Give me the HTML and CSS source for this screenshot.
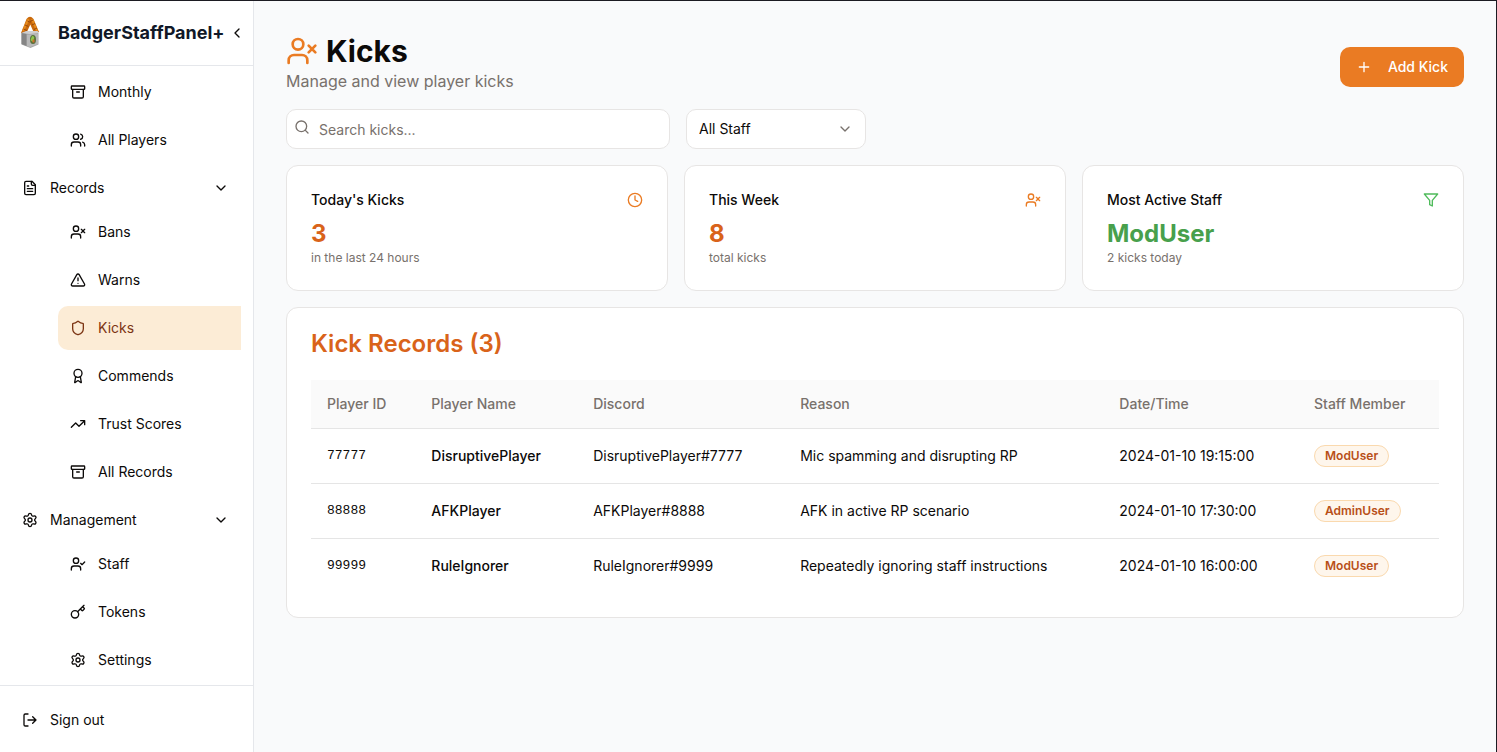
FILE: index.html
```html
<!DOCTYPE html>
<html lang="en">
<head>
<meta charset="utf-8">
<meta name="viewport" content="width=device-width, initial-scale=1">
<title>Kicks - BadgerStaffPanel+</title>
<link rel="stylesheet" href="styles.css">
</head>
<body>
<svg class="sprite" aria-hidden="true">
  <symbol id="archive" viewBox="0 0 24 24"><rect x="2" y="3" width="20" height="5" rx="1"/><path d="M4 8v11a2 2 0 0 0 2 2h12a2 2 0 0 0 2-2V8M10 12h4"/></symbol>
  <symbol id="users" viewBox="0 0 24 24"><path d="M16 21v-2a4 4 0 0 0-4-4H6a4 4 0 0 0-4 4v2"/><circle cx="9" cy="7" r="4"/><path d="M22 21v-2a4 4 0 0 0-3-3.87M16 3.13a4 4 0 0 1 0 7.75"/></symbol>
  <symbol id="file-text" viewBox="0 0 24 24"><path d="M15 2H6a2 2 0 0 0-2 2v16a2 2 0 0 0 2 2h12a2 2 0 0 0 2-2V7Z"/><path d="M14 2v4a2 2 0 0 0 2 2h4M10 9H8M16 13H8M16 17H8"/></symbol>
  <symbol id="user-x" viewBox="0 0 24 24"><path d="M16 21v-2a4 4 0 0 0-4-4H6a4 4 0 0 0-4 4v2"/><circle cx="9" cy="7" r="4"/><path d="m17 8 5 5M22 8l-5 5"/></symbol>
  <symbol id="user-check" viewBox="0 0 24 24"><path d="M16 21v-2a4 4 0 0 0-4-4H6a4 4 0 0 0-4 4v2"/><circle cx="9" cy="7" r="4"/><path d="m16 11 2 2 4-4"/></symbol>
  <symbol id="alert" viewBox="0 0 24 24"><path d="m21.73 18-8-14a2 2 0 0 0-3.48 0l-8 14A2 2 0 0 0 4 21h16a2 2 0 0 0 1.73-3M12 9v4M12 17h.01"/></symbol>
  <symbol id="shield" viewBox="0 0 24 24"><path d="M20 13c0 5-3.500 7.500-7.660 8.950a1 1 0 0 1-.670-.010C7.500 20.500 4 18 4 13V6a1 1 0 0 1 1-1c2 0 4.500-1.200 6.240-2.720a1.170 1.170 0 0 1 1.520 0C14.510 3.810 17 5 19 5a1 1 0 0 1 1 1z"/></symbol>
  <symbol id="award" viewBox="0 0 24 24"><path d="m15.477 12.890 1.515 8.526a.5.5 0 0 1-.810.470l-3.580-2.687a1 1 0 0 0-1.197 0l-3.586 2.686a.5.5 0 0 1-.810-.469l1.514-8.526"/><circle cx="12" cy="8" r="6"/></symbol>
  <symbol id="trending" viewBox="0 0 24 24"><path d="m22 7-8.500 8.500-5-5L2 17M16 7h6v6"/></symbol>
  <symbol id="settings" viewBox="0 0 24 24"><path d="M9.671 4.136a2.340 2.340 0 0 1 4.659 0 2.340 2.340 0 0 0 3.319 1.915 2.340 2.340 0 0 1 2.330 4.033 2.340 2.340 0 0 0 0 3.831 2.340 2.340 0 0 1-2.330 4.033 2.340 2.340 0 0 0-3.319 1.915 2.340 2.340 0 0 1-4.659 0 2.340 2.340 0 0 0-3.320-1.915 2.340 2.340 0 0 1-2.330-4.033 2.340 2.340 0 0 0 0-3.831A2.340 2.340 0 0 1 6.350 6.051a2.340 2.340 0 0 0 3.319-1.915"/><circle cx="12" cy="12" r="3"/></symbol>
  <symbol id="key" viewBox="0 0 24 24"><path d="m15.500 7.500 2.300 2.300a1 1 0 0 0 1.400 0l2.100-2.100a1 1 0 0 0 0-1.400L19 4M21 2l-9.600 9.600"/><circle cx="7.500" cy="15.500" r="5.500"/></symbol>
  <symbol id="logout" viewBox="0 0 24 24"><path d="m16 17 5-5-5-5M21 12H9M9 21H5a2 2 0 0 1-2-2V5a2 2 0 0 1 2-2h4"/></symbol>
  <symbol id="chevron-down" viewBox="0 0 24 24"><path d="m6 9 6 6 6-6"/></symbol>
  <symbol id="chevron-left" viewBox="0 0 24 24"><path d="m15 18-6-6 6-6"/></symbol>
  <symbol id="plus" viewBox="0 0 24 24"><path d="M5 12h14M12 5v14"/></symbol>
  <symbol id="search" viewBox="0 0 24 24"><circle cx="11" cy="11" r="8"/><path d="m21 21-4.300-4.300"/></symbol>
  <symbol id="clock" viewBox="0 0 24 24"><circle cx="12" cy="12" r="10"/><path d="M12 6v6l4 2"/></symbol>
  <symbol id="filter" viewBox="0 0 24 24"><path d="M22 3H2l8 9.460V19l4 2v-8.540L22 3z"/></symbol>
</svg>

<div class="app">
  <aside class="sidebar">
    <header class="brand">
      <svg class="logo" viewBox="0 0 36 36" aria-hidden="true">
        <path d="M9 18 14.500 4Q18-.5 21.500 4L27 17l-5 1L18.300 9.500 14.500 18z" fill="#c9690c"/>
        <path d="M11 16 16.500 4M25 16 20 4" fill="none" stroke="#e58a1b" stroke-width="2"/>
        <path d="m11.500 14 3.500 1.500m-2-5.500 3.500 1.500m-1-5.500 3 1.500m3.500 7 3-1.500m-5-3 3-1.500m-5-2 3-1.500" stroke="#98490c" stroke-width="1"/>
        <path d="m9.500 18 5-2h11l1 2v11.500l-8 3.500-9-3.500z" fill="#a9a9a9"/>
        <path d="m9.500 18 5-2h11l1 2-9 1z" fill="#cfcfcf"/>
        <path d="m9.500 18 5 1V31l-5-2z" fill="#858585"/>
        <path d="m15 20 11-1v10l-8 3-3-1z" fill="#b9b9b9"/>
        <ellipse cx="21" cy="24.500" rx="3" ry="4.500" fill="#56703a"/>
        <path d="M20 21q3 0 2 3l-1.500 3-2-2z" fill="#8fc64a"/>
        <path d="M20.500 24.500h2v3h-2z" fill="#cf6b29"/>
      </svg>
      <span class="brand-name">BadgerStaffPanel+</span>
      <button class="collapse" type="button" aria-label="Collapse sidebar"><svg class="icon"><use href="#chevron-left"/></svg></button>
    </header>
    <nav class="nav" aria-label="Main">
      <div class="group">
        <div class="subnav">
          <a class="item" href="#"><svg class="icon"><use href="#archive"/></svg>Monthly</a>
          <a class="item" href="#"><svg class="icon"><use href="#users"/></svg>All Players</a>
        </div>
      </div>
      <div class="group">
        <button class="item" type="button" aria-expanded="true"><svg class="icon"><use href="#file-text"/></svg><span class="grow">Records</span><svg class="icon"><use href="#chevron-down"/></svg></button>
        <div class="subnav">
          <a class="item" href="#"><svg class="icon"><use href="#user-x"/></svg>Bans</a>
          <a class="item" href="#"><svg class="icon"><use href="#alert"/></svg>Warns</a>
          <a class="item active" href="#" aria-current="page"><svg class="icon"><use href="#shield"/></svg>Kicks</a>
          <a class="item" href="#"><svg class="icon"><use href="#award"/></svg>Commends</a>
          <a class="item" href="#"><svg class="icon"><use href="#trending"/></svg>Trust Scores</a>
          <a class="item" href="#"><svg class="icon"><use href="#archive"/></svg>All Records</a>
        </div>
      </div>
      <div class="group">
        <button class="item" type="button" aria-expanded="true"><svg class="icon"><use href="#settings"/></svg><span class="grow">Management</span><svg class="icon"><use href="#chevron-down"/></svg></button>
        <div class="subnav">
          <a class="item" href="#"><svg class="icon"><use href="#user-check"/></svg>Staff</a>
          <a class="item" href="#"><svg class="icon"><use href="#key"/></svg>Tokens</a>
          <a class="item" href="#"><svg class="icon"><use href="#settings"/></svg>Settings</a>
        </div>
      </div>
    </nav>
    <footer class="signout">
      <button class="item" type="button"><svg class="icon"><use href="#logout"/></svg>Sign out</button>
    </footer>
  </aside>

  <main class="main">
    <header class="page-head">
      <div>
        <h1><svg class="icon icon-lg"><use href="#user-x"/></svg>Kicks</h1>
        <p class="subtitle">Manage and view player kicks</p>
      </div>
      <button class="add" type="button"><svg class="icon"><use href="#plus"/></svg>Add Kick</button>
    </header>

    <div class="filters">
      <div class="search">
        <svg class="icon"><use href="#search"/></svg>
        <input type="search" aria-label="Search kicks" placeholder="Search kicks...">
      </div>
      <div class="select">
        <select aria-label="Staff"><option>All Staff</option><option>ModUser</option><option>AdminUser</option></select>
        <svg class="icon"><use href="#chevron-down"/></svg>
      </div>
    </div>

    <section class="stats">
      <article class="card">
        <div class="card-head"><h2>Today's Kicks</h2><svg class="icon orange"><use href="#clock"/></svg></div>
        <p class="value">3</p>
        <p class="note">in the last 24 hours</p>
      </article>
      <article class="card">
        <div class="card-head"><h2>This Week</h2><svg class="icon orange"><use href="#user-x"/></svg></div>
        <p class="value">8</p>
        <p class="note">total kicks</p>
      </article>
      <article class="card">
        <div class="card-head"><h2>Most Active Staff</h2><svg class="icon green"><use href="#filter"/></svg></div>
        <p class="value value-green">ModUser</p>
        <p class="note">2 kicks today</p>
      </article>
    </section>

    <section class="card">
      <h2 class="records-title">Kick Records (3)</h2>
      <table>
        <thead><tr><th>Player ID</th><th>Player Name</th><th>Discord</th><th>Reason</th><th>Date/Time</th><th>Staff Member</th></tr></thead>
        <tbody>
          <tr><td class="mono">77777</td><td class="name">DisruptivePlayer</td><td>DisruptivePlayer#7777</td><td>Mic spamming and disrupting RP</td><td>2024-01-10 19:15:00</td><td><span class="badge">ModUser</span></td></tr>
          <tr><td class="mono">88888</td><td class="name">AFKPlayer</td><td>AFKPlayer#8888</td><td>AFK in active RP scenario</td><td>2024-01-10 17:30:00</td><td><span class="badge">AdminUser</span></td></tr>
          <tr><td class="mono">99999</td><td class="name">RuleIgnorer</td><td>RuleIgnorer#9999</td><td>Repeatedly ignoring staff instructions</td><td>2024-01-10 16:00:00</td><td><span class="badge">ModUser</span></td></tr>
        </tbody>
      </table>
    </section>
  </main>
</div>
</body>
</html>
```
FILE: styles.css
```css
* { box-sizing: border-box; }

body {
  margin: 0;
  font: 14px/20px Inter, "Liberation Sans", sans-serif;
  color: #0c0a09;
  background: #f9fafb;
}

h1, h2, p { margin: 0; }
button, input, select { font: inherit; color: inherit; }
button { border: 0; background: none; cursor: pointer; }

.sprite { position: absolute; width: 0; height: 0; }

.icon {
  width: 16px;
  height: 16px;
  flex: none;
  fill: none;
  stroke: currentColor;
  stroke-width: 2;
  stroke-linecap: round;
  stroke-linejoin: round;
}
.icon-lg { width: 32px; height: 32px; color: #ea7b23; }
.orange { color: #ea7b23; }
.green { color: #4fbb5b; }

.app {
  display: flex;
  height: 100vh;
  border-top: 1px solid #1c1b22;
  border-right: 1px solid #1c1b22;
}

/* Sidebar */
.sidebar {
  display: flex;
  flex-direction: column;
  flex: none;
  width: 254px;
  background: #fff;
  border-right: 1px solid #e5e7eb;
}
.brand {
  display: flex;
  align-items: center;
  height: 65px;
  padding: 0 8px 0 12px;
  border-bottom: 1px solid #e5e7eb;
}
.logo { width: 36px; height: 36px; margin-right: 10px; }
.brand-name {
  flex: 1;
  font-size: 18px;
  line-height: 28px;
  font-weight: 700;
  color: #111827;
}
.collapse { display: flex; padding: 0; }

.nav {
  display: flex;
  flex-direction: column;
  gap: 4px;
  flex: 1;
  min-height: 0;
  padding: 4px 12px 0 10px;
  overflow: hidden;
}
.subnav {
  display: flex;
  flex-direction: column;
  gap: 4px;
  margin-left: 48px;
}
.item {
  display: flex;
  align-items: center;
  gap: 12px;
  width: 100%;
  height: 44px;
  padding: 0 12px;
  text-align: left;
  text-decoration: none;
  color: #0c0a09;
}
.active {
  color: #7c3514;
  background: #fcecd6;
  border-radius: 10px 0 0 10px;
}
.grow { flex: 1; }
.signout { padding: 12px 10px 10px; border-top: 1px solid #e5e7eb; }

/* Page */
.main {
  display: flex;
  flex-direction: column;
  gap: 16px;
  flex: 1;
  min-width: 0;
  padding: 32px;
  overflow: auto;
}
.page-head { display: flex; justify-content: space-between; align-items: flex-end; }
h1 {
  display: flex;
  align-items: center;
  gap: 8px;
  font-size: 30px;
  line-height: 36px;
  font-weight: 700;
}
.subtitle { font-size: 16px; line-height: 24px; color: #78716c; }
.add {
  display: flex;
  align-items: center;
  gap: 16px;
  height: 40px;
  margin-bottom: 6px;
  padding: 0 16px;
  border-radius: 10px;
  font-weight: 500;
  color: #fff;
  background: #ea7b23;
}

.filters { display: flex; gap: 16px; }
.search { position: relative; flex: 0 1 384px; }
.search .icon { position: absolute; left: 8px; top: 10px; color: #78716c; }
.select { position: relative; flex: 0 0 180px; }
.select .icon { position: absolute; right: 13px; top: 12px; color: #78716c; pointer-events: none; }
input, select {
  display: block;
  width: 100%;
  height: 40px;
  padding: 0 12px;
  border: 1px solid #e7e5e4;
  border-radius: 10px;
  background: #fff;
  appearance: none;
}
input { padding-left: 32px; }
input::placeholder { color: #78716c; opacity: 1; }

.card {
  padding: 24px;
  border: 1px solid #e7e5e4;
  border-radius: 12px;
  background: #fff;
}
.stats { display: grid; grid-template-columns: repeat(3, 1fr); gap: 16px; }
.card-head {
  display: flex;
  align-items: center;
  justify-content: space-between;
  margin-bottom: 8px;
}
.card-head h2 { font-size: 14px; line-height: 20px; font-weight: 500; }
.value { font-size: 24px; line-height: 32px; font-weight: 700; color: #d9631a; }
.value-green { color: #48a04c; }
.note { font-size: 12px; line-height: 16px; color: #78716c; }

.records-title {
  margin-bottom: 24px;
  font-size: 24px;
  line-height: 24px;
  font-weight: 600;
  color: #d9631a;
}

/* Records table */
table { width: 100%; border-collapse: collapse; }
th, td { padding: 0 16px; text-align: left; white-space: nowrap; }
th { height: 48px; font-weight: 500; color: #78716c; background: #fafafa; }
td { height: 55px; }
tr { border-bottom: 1px solid #e5e5e5; }
tbody tr:last-child { border-bottom: 0; }
.mono { font-family: "Liberation Mono", monospace; font-size: 13px; }
.name { font-weight: 500; }
.badge {
  display: inline-block;
  padding: 2px 10px;
  border: 1px solid #fad9ae;
  border-radius: 12px;
  font-size: 12px;
  line-height: 16px;
  font-weight: 600;
  color: #b84f18;
  background: #fef6ec;
}
```
